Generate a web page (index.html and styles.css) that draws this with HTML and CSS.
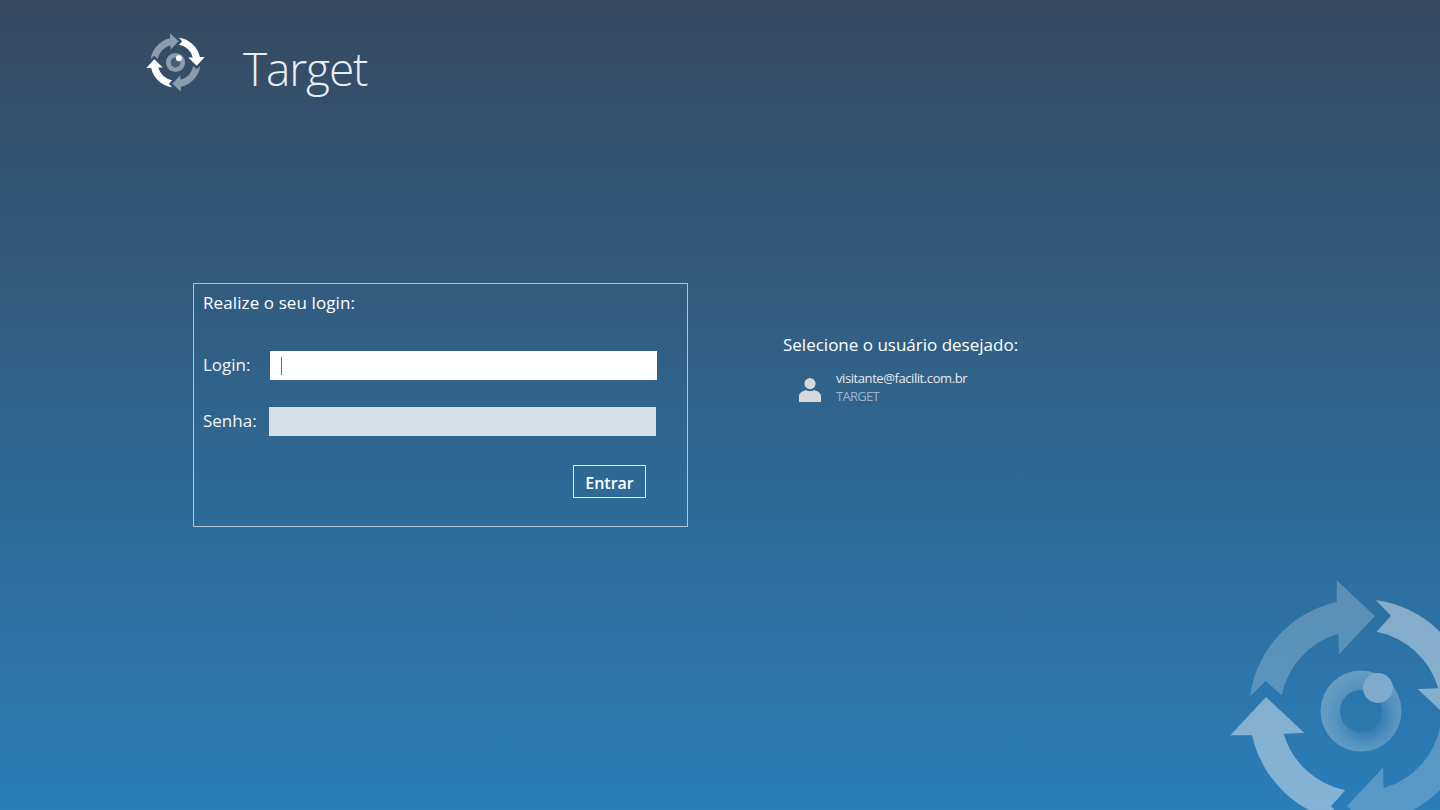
FILE: index.html
```html
<!DOCTYPE html>
<html lang="pt-BR">
<head>
<meta charset="utf-8">
<title>Target</title>
<link rel="stylesheet" href="styles.css">
</head>
<body>
<svg width="0" height="0" class="defs">
  <defs>
    <path id="arrow" d="M-111,-14.7 A112,112 0 0 1 -24.3,-109 L-24.3,-130.7 L14,-95 L-22,-56.7 L-22.7,-77.3 A81,81 0 0 0 -79.3,-15.7 L-95.3,-30 Z"/>
    <radialGradient id="ring-wm" cx="0.56" cy="0.57" r="0.52">
      <stop offset="0.25" stop-color="#fff" stop-opacity="0"/>
      <stop offset="0.7" stop-color="#fff" stop-opacity="0.2"/>
      <stop offset="1" stop-color="#fff" stop-opacity="0.27"/>
    </radialGradient>
  </defs>
</svg>
<header class="top">
  <svg class="logo" viewBox="-132 -132 264 264" aria-hidden="true">
    <use href="#arrow" class="logo-grey"/>
    <use href="#arrow" class="logo-white" transform="rotate(90)"/>
    <use href="#arrow" class="logo-grey" transform="rotate(180)"/>
    <use href="#arrow" class="logo-white" transform="rotate(270)"/>
    <circle r="43" class="logo-grey"/>
    <circle r="22" class="logo-pupil"/>
    <circle cx="15" cy="-19" r="13" class="logo-white"/>
  </svg>
  <h1 class="brand">Target</h1>
</header>
<main class="content">
  <section class="login">
    <h2 class="login-title">Realize o seu login:</h2>
    <div class="row row-login">
      <label class="label label-login">Login:</label>
      <div class="field field-active"><span class="caret"></span></div>
    </div>
    <div class="row row-senha">
      <label class="label label-senha">Senha:</label>
      <div class="field field-idle"></div>
    </div>
    <div class="actions">
      <button class="btn" type="button">Entrar</button>
    </div>
  </section>
  <section class="users">
    <h2 class="users-title">Selecione o usuário desejado:</h2>
    <div class="user">
      <svg class="user-icon" viewBox="0 0 22 24" aria-hidden="true">
        <circle cx="11" cy="5.6" r="5.6"/>
        <path d="M0,24 L0,18 C0,15 3.5,13 7,12 C9,13.6 13,13.6 15,12 C18.5,13 22,15 22,18 L22,24 Z"/>
      </svg>
      <div class="user-text">
        <div class="user-mail">visitante@facilit.com.br</div>
        <div class="user-org">TARGET</div>
      </div>
    </div>
  </section>
</main>
<svg class="watermark" viewBox="0 0 210 232" aria-hidden="true">
  <g transform="translate(131,132)">
    <use href="#arrow" class="wm-dark"/>
    <use href="#arrow" class="wm-light" transform="rotate(90)"/>
    <use href="#arrow" class="wm-dark" transform="rotate(180)"/>
    <use href="#arrow" class="wm-light" transform="rotate(270)"/>
    <path class="wm-ring" fill-rule="evenodd" d="M-40.5,0 A40.5,40.5 0 1 1 40.5,0 A40.5,40.5 0 1 1 -40.5,0 Z M-21,0 A21,21 0 1 0 21,0 A21,21 0 1 0 -21,0 Z"/>
    <circle cx="17" cy="-23" r="15" class="wm-dot"/>
  </g>
</svg>
</body>
</html>
```
FILE: styles.css
```css
* { box-sizing: border-box; }
html, body { height: 100%; }
body {
  margin: 0;
  height: 810px;
  overflow: hidden;
  position: relative;
  background: linear-gradient(180deg, #364960 0%, #2a7eb9 100%);
  color: #fff;
  font-family: "Open Sans", "Noto Sans", sans-serif;
}
.defs { position: absolute; }
.top {
  display: flex;
  align-items: center;
  height: 125px;
  padding: 0 0 0 146px;
}
.logo { width: 59px; height: 59px; flex: none; }
.logo-grey { fill: #8c9cad; }
.logo-white { fill: #fff; }
.logo-pupil { fill: #4a5d73; }
.brand {
  margin: 10px 0 0 38px;
  font-size: 46px;
  font-weight: 300;
  line-height: 60px;
  color: #e9eef2;
  letter-spacing: -1.1px;
}
.content {
  display: flex;
  align-items: flex-start;
  padding: 158px 0 0 193px;
}
.login {
  width: 495px;
  height: 244px;
  border: 1px solid rgba(255, 255, 255, 0.62);
  padding: 5px 30px 0 9px;
}
.login-title, .users-title {
  margin: 0;
  font-size: 17px;
  font-weight: 400;
  line-height: 27px;
  color: #fff;
}
.login-title { letter-spacing: 0.1px; }
.row { display: flex; align-items: center; height: 29px; }
.row-login { margin-top: 35px; }
.row-senha { margin-top: 27px; }
.label { font-size: 17px; line-height: 27px; padding-bottom: 2px; color: #f2f5f7; }
.label-login { width: 67px; }
.label-senha { width: 66px; }
.field { width: 387px; height: 29px; flex: none; display: flex; align-items: center; padding-left: 11px; }
.field-active { background: #fff; }
.field-idle { background: #d6dfe8; }
.caret { display: block; width: 1px; height: 18px; background: #6f6f6f; }
.actions { display: flex; justify-content: flex-end; padding: 29px 11px 0 0; }
.btn {
  width: 73px;
  height: 33px;
  padding: 2px 0 0;
  background: transparent;
  border: 1px solid rgba(255, 255, 255, 0.85);
  color: #fff;
  font-family: inherit;
  font-size: 16px;
  font-weight: 600;
  line-height: 1;
}
.users { margin-left: 95px; padding-top: 48px; }
.user { display: flex; align-items: center; margin-top: 11px; padding-left: 16px; }
.user-icon { width: 22px; height: 24px; margin-top: 6px; fill: #d5d8db; flex: none; }
.user-text { margin-left: 15px; font-size: 13px; line-height: 18px; }
.user-mail { color: #e6ebef; letter-spacing: -0.42px; }
.user-org { color: #9db4c8; letter-spacing: -0.7px; }
.watermark {
  position: absolute;
  left: 1230px;
  top: 579px;
  width: 210px;
  height: 232px;
}
.wm-light { fill: rgba(255, 255, 255, 0.42); }
.wm-dark { fill: rgba(255, 255, 255, 0.22); }
.wm-ring { fill: url(#ring-wm); }
.wm-dot { fill: #7eabcb; }
```
